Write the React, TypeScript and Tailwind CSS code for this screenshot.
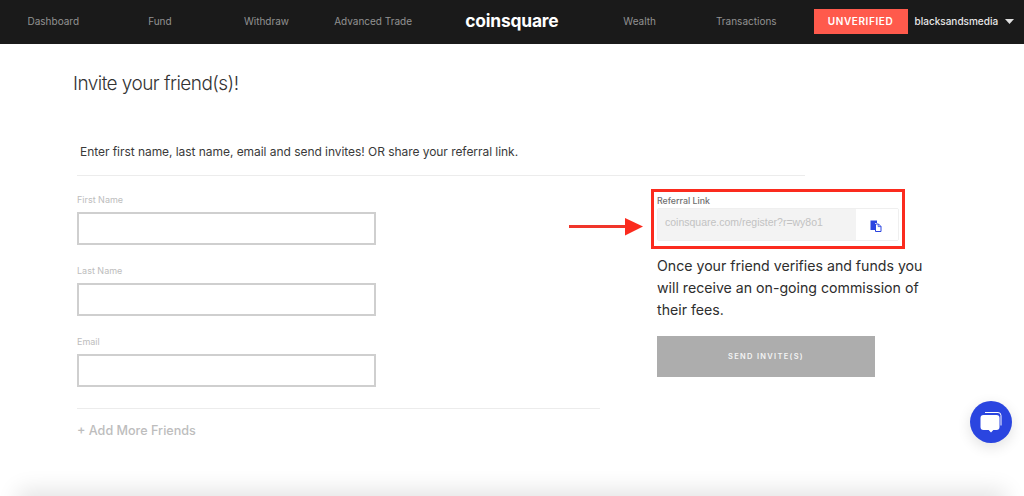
import React from "react";

const leftLinks = ["Dashboard", "Fund", "Withdraw", "Advanced Trade"];
const rightLinks = ["Wealth", "Transactions"];
const fields = ["First Name", "Last Name", "Email"];

const NavLink = ({ label }: { label: string }) => (
  <a className="w-[106.6px] text-center text-[10px] text-[#929292]">{label}</a>
);

const Field = ({ label }: { label: string }) => (
  <div className="flex flex-col">
    <label className="h-[18px] text-[9px] leading-[12px] text-[#bdbdbd]">{label}</label>
    <input className="h-[33px] w-[299px] border-2 border-[#cfcfcf] bg-white outline-none" />
  </div>
);

const App: React.FC = () => {
  return (
    <div className="relative h-[496px] w-[1024px] overflow-hidden bg-white font-['Inter',sans-serif] text-[#2a2a2a]">
      <nav className="flex h-[44px] items-center bg-[#1a1a1a] pb-[1px]">
        {leftLinks.map((l) => (
          <NavLink key={l} label={l} />
        ))}
        <div className="w-[160px] pl-[11px] text-center text-[17.4px] font-bold tracking-[-0.2px] text-white">
          coinsquare
        </div>
        {rightLinks.map((l) => (
          <NavLink key={l} label={l} />
        ))}
        <div className="ml-[14px] flex h-[25px] w-[94px] items-center justify-center bg-[#ff5a4c] text-[10px] font-semibold tracking-[0.6px] text-white">
          UNVERIFIED
        </div>
        <div className="ml-[7px] text-[10px] font-medium text-[#e8e8e8]">blacksandsmedia</div>
        <svg className="ml-[7px]" width="9" height="5" viewBox="0 0 9 5">
          <path d="M0 0h9L4.5 5z" fill="#e0e0e0" />
        </svg>
      </nav>

      <main className="pl-[73px]">
        <h1 className="pt-[26px] text-[19px] font-light leading-[28px] tracking-[-0.55px] text-[#333]">
          Invite your friend(s)!
        </h1>
        <p className="mt-[45px] pl-[7px] text-[12px] leading-[18px] tracking-[-0.05px] text-[#3a3a3a]">
          Enter first name, last name, email and send invites! OR share your referral link.
        </p>
        <div className="mt-[14px] ml-[4px] h-px w-[728px] bg-[#ececec]" />

        <div className="ml-[4px] flex pt-[18px]">
          <section className="flex w-[580px] flex-col">
            <div className="flex flex-col gap-[20px]">
              {fields.map((f) => (
                <Field key={f} label={f} />
              ))}
            </div>
            <div className="mt-[21px] h-px w-[523px] bg-[#ececec]" />
            <div className="mt-[14px] text-[12.6px] font-medium leading-[16px] text-[#bdbdbd]">
              + Add More Friends
            </div>
          </section>

          <section className="flex w-[270px] flex-col">
            <label className="h-[14px] text-[8.8px] font-medium leading-[14px] text-[#6f6f6f]">Referral Link</label>
            <div className="flex h-[33px] w-[242px] overflow-hidden rounded-[2px] border border-[#efefef]">
              <div className="flex w-[198px] items-center bg-[#f3f3f3] pb-[3px] pl-[7px] font-['Liberation_Sans',sans-serif] text-[10.5px] text-[#c2c2c2]">
                coinsquare.com/register?r=wy8o1
              </div>
              <div className="flex flex-1 items-center justify-center bg-white pt-[2px] pr-[3px]">
                <svg width="12" height="12" viewBox="0 0 12 12">
                  <path d="M0.5 0.5h6.5v2.5H5v7H0.5z" fill="#2b44e0" />
                  <path d="M5.5 4h3l2.5 2.5v5H5.5z" fill="#fff" stroke="#2b44e0" strokeWidth="1" />
                  <path d="M8.2 4v2.6H11" fill="none" stroke="#2b44e0" strokeWidth="0.8" />
                </svg>
              </div>
            </div>
            <p className="mt-[14px] w-[270px] text-[14.15px] leading-[22px] text-[#2e2e2e]">
              Once your friend verifies and funds you will receive an on-going commission of their fees.
            </p>
            <button className="mt-[15px] h-[41px] w-[218px] bg-[#adadad] text-[7.5px] font-semibold tracking-[1.3px] text-[#f4f4f4]">
              SEND INVITE(S)
            </button>
          </section>
        </div>
      </main>

      {/* annotation drawn over the screenshot */}
      <div className="absolute left-[651px] top-[189px] h-[60px] w-[254px] border-[3px] border-[#fb2b1e]" />
      <svg className="absolute left-[568px] top-[215px]" width="76" height="24" viewBox="0 0 76 24">
        <path d="M1 10h57v3H1z" fill="#f0352a" />
        <path d="M57 3l18 8.5-18 9z" fill="#fb2b1e" />
      </svg>

      {/* chat bubble */}
      <div className="absolute left-[970px] top-[401px] flex h-[42px] w-[42px] items-center justify-center rounded-full bg-[#2a45e0] shadow-[0_4px_14px_rgba(0,0,0,0.12)]">
        <svg width="24" height="24" viewBox="0 0 24 24">
          <path d="M6 2.5h13a3 3 0 0 1 3 3v10" fill="none" stroke="#fff" strokeWidth="1" />
          <path d="M4.5 5h13a3 3 0 0 1 3 3v9a3 3 0 0 1-3 3h-3.2L12 22.4 9.7 20H4.5a3 3 0 0 1-3-3V8a3 3 0 0 1 3-3z" fill="#fff" />
        </svg>
      </div>

      {/* next card's shadow peeking in at the bottom */}
      <div className="absolute bottom-[-30px] left-[18px] right-[18px] h-[30px] shadow-[0_-6px_22px_rgba(0,0,0,0.11)]" />
    </div>
  );
};

export default App;
